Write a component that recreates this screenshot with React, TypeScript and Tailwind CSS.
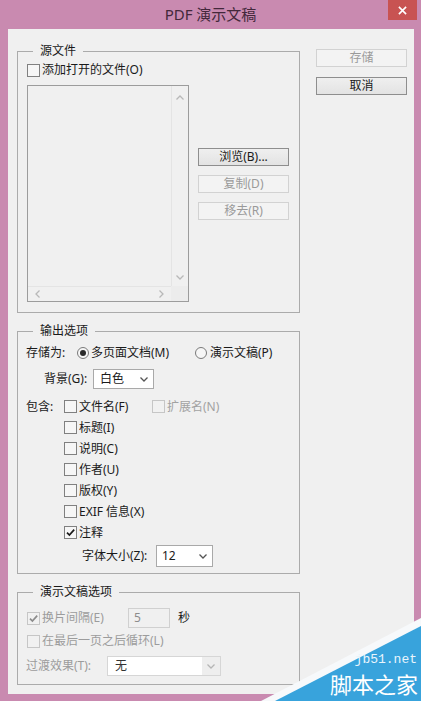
import React from "react";

function Check({ checked = false, disabled = false }: { checked?: boolean; disabled?: boolean }) {
  return (
    <span
      className={`w-[13px] h-[13px] shrink-0 border flex items-center justify-center ${
        disabled ? "border-[#c6c6c6] bg-[#f1f1f1]" : "border-[#808080] bg-[#f6f6f6]"
      }`}
    >
      {checked && (
        <svg viewBox="0 0 11 11" className="w-[11px] h-[11px]">
          <path d="M2 5.6 L4.4 8 L9.2 2.6" fill="none" stroke={disabled ? "#8c8c8c" : "#1a1a1a"} strokeWidth="1.7" />
        </svg>
      )}
    </span>
  );
}

function Radio({ on = false }: { on?: boolean }) {
  return (
    <span className="w-[12px] h-[12px] shrink-0 rounded-full border border-[#7a7a7a] bg-[#f6f6f6] flex items-center justify-center">
      {on && <span className="w-[6px] h-[6px] rounded-full bg-[#2a2a2a]" />}
    </span>
  );
}

function Chevron({ color = "#555" }: { color?: string }) {
  return (
    <svg viewBox="0 0 8 5" className="w-[8px] h-[5px]">
      <path d="M0.5 0.5 L4 4 L7.5 0.5" fill="none" stroke={color} strokeWidth="1.3" />
    </svg>
  );
}

function Btn({ label, disabled = false }: { label: string; disabled?: boolean }) {
  return (
    <div
      className={`h-[18px] w-full border flex items-center justify-center leading-none ${
        disabled
          ? "border-[#d2d2d2] bg-[#f3f3f3] text-[#9a9a9a]"
          : "border-[#8e8e8e] bg-gradient-to-b from-[#efefef] to-[#e3e3e3] text-[#1a1a1a]"
      }`}
    >
      {label}
    </div>
  );
}

function Group({ title, children }: { title: string; children: React.ReactNode }) {
  return (
    <fieldset className="w-[283px] border border-[#ababab]">
      <legend className="ml-[15px] px-[7px] leading-[16px] text-[#1a1a1a]">{title}</legend>
      {children}
    </fieldset>
  );
}

export default function App() {
  return (
    <div className="relative w-[421px] h-[701px] overflow-hidden bg-[#c98ab0] flex flex-col font-['Noto_Sans','Noto_Sans_CJK_SC',sans-serif] text-[12px] text-[#1a1a1a]">
      {/* title bar */}
      <div className="h-[29px] shrink-0 flex items-start">
        <div className="w-[33px]" />
        <div className="flex-1 text-center text-[15px] leading-[29px] text-[#43283b]">PDF 演示文稿</div>
        <div className="w-[29px] h-[20px] mr-[4px] bg-[#c85352] flex items-center justify-center">
          <svg viewBox="0 0 10 10" className="w-[9px] h-[9px]">
            <path d="M1 1 L9 9 M9 1 L1 9" stroke="#fff" strokeWidth="1.8" />
          </svg>
        </div>
      </div>

      {/* client area */}
      <div className="ml-[8px] mr-[7px] h-[665px] bg-[#f0f0f0] flex">
        <div className="w-[292px] pl-[9px] pt-[14px] flex flex-col gap-[10px]">
          {/* 源文件 */}
          <Group title="源文件">
            <div className="pl-[9px] pt-[3px] pb-[10px]">
              <div className="h-[16px] flex items-center gap-[2px]">
                <Check />
                <span>添加打开的文件(O)</span>
              </div>
              <div className="mt-[7px] flex">
                <div className="w-[162px] h-[217px] border border-[#9c9c9c] bg-[#f0f0f0] flex flex-col">
                  <div className="flex-1 flex">
                    <div className="flex-1" />
                    <div className="w-[17px] border-l border-[#e4e4e4] flex flex-col items-center justify-between pt-[9px] pb-[6px]">
                      <svg viewBox="0 0 8 5" className="w-[8px] h-[5px]">
                        <path d="M0.5 4.5 L4 1 L7.5 4.5" fill="none" stroke="#b8b8b8" strokeWidth="1.3" />
                      </svg>
                      <Chevron color="#b8b8b8" />
                    </div>
                  </div>
                  <div className="h-[15px] flex">
                    <div className="flex-1 border-t border-[#e4e4e4] flex items-center justify-between px-[7px]">
                      <svg viewBox="0 0 5 8" className="w-[5px] h-[8px]">
                        <path d="M4.5 0.5 L1 4 L4.5 7.5" fill="none" stroke="#b8b8b8" strokeWidth="1.3" />
                      </svg>
                      <svg viewBox="0 0 5 8" className="w-[5px] h-[8px]">
                        <path d="M0.5 0.5 L4 4 L0.5 7.5" fill="none" stroke="#b8b8b8" strokeWidth="1.3" />
                      </svg>
                    </div>
                    <div className="w-[17px] bg-[#ececec]" />
                  </div>
                </div>
                <div className="ml-[9px] w-[91px] mt-[63px] flex flex-col gap-[9px]">
                  <Btn label="浏览(B)..." />
                  <Btn label="复制(D)" disabled />
                  <Btn label="移去(R)" disabled />
                </div>
              </div>
            </div>
          </Group>

          {/* 输出选项 */}
          <Group title="输出选项">
            <div className="pl-[8px] pb-[6px]">
              <div className="mt-[3px] h-[21px] flex items-center">
                <span className="w-[51px]">存储为:</span>
                <Radio on />
                <span className="ml-[2px] w-[104px]">多页面文档(M)</span>
                <Radio />
                <span className="ml-[3px]">演示文稿(P)</span>
              </div>
              <div className="mt-[6px] h-[20px] flex items-center pl-[18px]">
                <span className="w-[49px]">背景(G):</span>
                <div className="w-[61px] h-[20px] border border-[#a9a9a9] bg-white flex items-center justify-between pl-[6px] pr-[5px]">
                  <span>白色</span>
                  <Chevron />
                </div>
              </div>
              <div className="mt-[7px] h-[21px] flex items-center">
                <span className="w-[38px]">包含:</span>
                <Check />
                <span className="ml-[2px] w-[73px]">文件名(F)</span>
                <Check disabled />
                <span className="ml-[2px] text-[#a2a2a2]">扩展名(N)</span>
              </div>
              {["标题(I)", "说明(C)", "作者(U)", "版权(Y)", "EXIF 信息(X)"].map((t) => (
                <div key={t} className="h-[21px] flex items-center gap-[2px] pl-[38px]">
                  <Check />
                  <span>{t}</span>
                </div>
              ))}
              <div className="h-[21px] flex items-center gap-[2px] pl-[38px]">
                <Check checked />
                <span>注释</span>
              </div>
              <div className="mt-[2px] h-[22px] flex items-center pl-[56px]">
                <span className="w-[74px]">字体大小(Z):</span>
                <div className="w-[57px] h-[22px] border border-[#a9a9a9] bg-white flex items-center justify-between pl-[5px] pr-[5px]">
                  <span>12</span>
                  <Chevron />
                </div>
              </div>
            </div>
          </Group>

          {/* 演示文稿选项 */}
          <Group title="演示文稿选项">
            <div className="pl-[9px] pb-[8px]">
              <div className="mt-[8px] h-[20px] flex items-center">
                <Check checked disabled />
                <span className="ml-[2px] w-[86px] text-[#9c9c9c]">换片间隔(E)</span>
                <div className="w-[42px] h-[20px] border border-[#d0d0d0] bg-[#f0f0f0] flex items-center pl-[5px] text-[#8c8c8c]">
                  5
                </div>
                <span className="ml-[8px]">秒</span>
              </div>
              <div className="mt-[3px] h-[20px] flex items-center gap-[2px]">
                <Check disabled />
                <span className="text-[#9c9c9c]">在最后一页之后循环(L)</span>
              </div>
              <div className="mt-[5px] h-[20px] flex items-center ml-[-1px]">
                <span className="w-[81px] text-[#9c9c9c]">过渡效果(T):</span>
                <div className="w-[114px] h-[20px] border border-[#d6d6d6] flex">
                  <div className="flex-1 bg-white flex items-center pl-[7px] text-[#333]">无</div>
                  <div className="w-[18px] bg-[#eeeeee] flex items-center justify-center">
                    <Chevron color="#b5b5b5" />
                  </div>
                </div>
              </div>
            </div>
          </Group>
        </div>

        <div className="ml-[16px] pt-[20px] w-[91px] flex flex-col gap-[10px]">
          <Btn label="存储" disabled />
          <Btn label="取消" />
        </div>
      </div>

      {/* watermark */}
      <svg className="absolute left-[261px] top-[616px] w-[160px] h-[85px]" viewBox="0 0 160 85">
        <polygon points="0,85 160,2 160,85" fill="#f7f9fb" />
        <polygon points="14,85 160,10 160,85" fill="#38a3dc" />
      </svg>
      <div className="absolute right-[4px] top-[652px] leading-[15px] text-[13px] text-[#e9f5fc] font-['Liberation_Mono',monospace]">
        jb51.net
      </div>
      <div className="absolute right-[3px] top-[672px] leading-[22px] text-[22px] text-white font-['Noto_Sans_CJK_SC',sans-serif]">
        脚本之家
      </div>
    </div>
  );
}
